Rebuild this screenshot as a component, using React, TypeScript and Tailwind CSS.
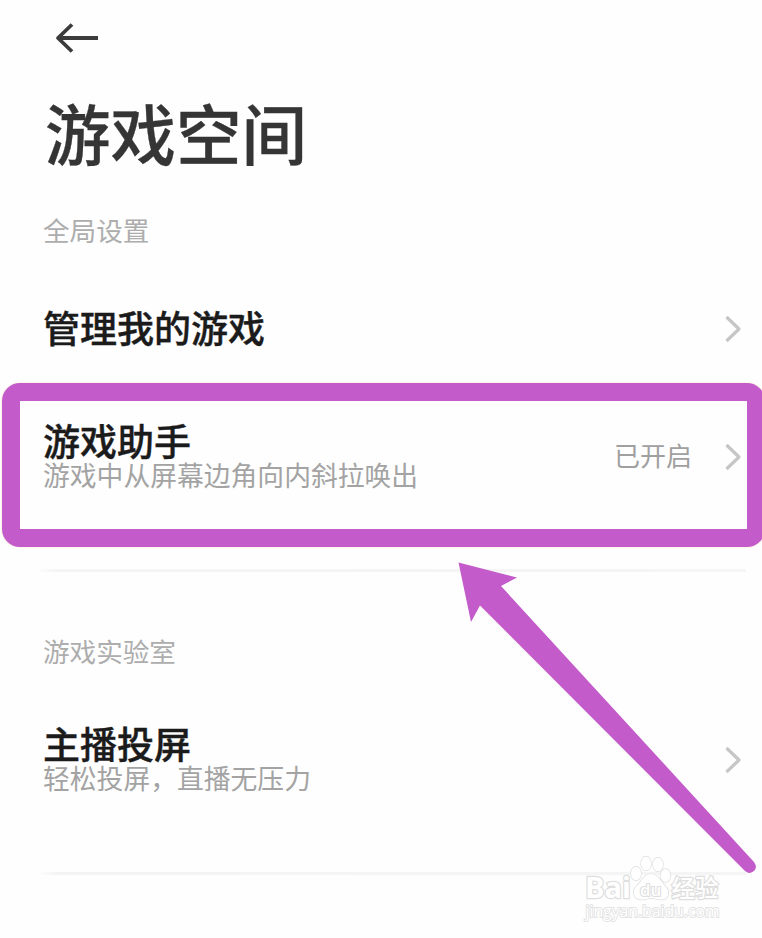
import type { ReactNode } from "react"
import { clsx } from "clsx"

interface SettingRowProps {
  title: string
  description?: string
  value?: string
  className?: string
}

function BackArrow() {
  return (
    <svg width="44" height="32" viewBox="0 0 44 32" fill="none" stroke="#3c3c3c" strokeWidth="3.8">
      <path d="M43 16H3" />
      <path d="M17 2.5L3 16L17 29.5" strokeLinejoin="round" />
    </svg>
  )
}

function ChevronIcon() {
  return (
    <svg width="18" height="28" viewBox="0 0 18 28" fill="none" stroke="#c6c6c6" strokeWidth="3.2">
      <path d="M2.5 2L15 14L2.5 26" strokeLinejoin="round" />
    </svg>
  )
}

function SectionLabel({ children, className }: { children: ReactNode; className?: string }) {
  return <h2 className={clsx("h-10 pl-[43px] text-[26.6px] leading-9 text-[#adadad]", className)}>{children}</h2>
}

function SettingRow({ title, description, value, className }: SettingRowProps) {
  return (
    <button type="button" className={clsx("flex w-full items-center pr-5 pl-[43px] text-left", className)}>
      <span className={clsx("flex flex-1 flex-col", description ? "pb-0.5" : "pb-[5px]")}>
        <span className="text-[37px] leading-9 font-medium text-[#1b1b1b] [-webkit-text-stroke:0.4px_#1b1b1b]">
          {title}
        </span>
        {description && <span className="text-[26.8px] leading-[33px] text-[#a3a3a3]">{description}</span>}
      </span>
      {value && <span className="mr-8 pb-1 text-[26px] leading-8 text-[#a0a0a0]">{value}</span>}
      <ChevronIcon />
    </button>
  )
}

function Divider() {
  return <div className="mr-4 ml-9 h-[3px] bg-linear-to-r from-transparent via-[#f4f4f4] via-3% to-[#f5f5f5]" />
}

// Highlight frame and pointer drawn over the settings list
function Annotation() {
  return (
    <>
      <div className="pointer-events-none absolute top-[383px] left-[2px] h-[164px] w-[763px] rounded-[18px] border-[18px] border-[#c35bca] shadow-[0_0_2px_#ffd9b8]" />
      <svg className="pointer-events-none absolute inset-0" width="762" height="938" viewBox="0 0 762 938">
        <path
          d="M458.5 562.5L517 577.5L501 586L754 862Q757.5 867 754.5 870.5Q750 875 745 871L480 605.5L471 622Z"
          fill="#c35bca"
        />
      </svg>
    </>
  )
}

function Watermark() {
  return (
    <svg
      className="pointer-events-none absolute top-[852px] left-[580px]"
      width="150"
      height="76"
      viewBox="0 0 150 76"
      fill="#fff"
      stroke="#dedede"
      strokeWidth="1.4"
    >
      <g fontFamily="'Open Sans', 'Noto Sans CJK SC', sans-serif" paintOrder="stroke">
        <text x="5" y="46" fontSize="29" fontWeight="700" strokeWidth="2.4" textLength="46" lengthAdjust="spacingAndGlyphs">
          Bai
        </text>
        <ellipse cx="56" cy="21.5" rx="5" ry="6.8" />
        <ellipse cx="66" cy="11.5" rx="5" ry="7" />
        <ellipse cx="78" cy="12.5" rx="5" ry="6.8" />
        <ellipse cx="85.5" cy="23.5" rx="5" ry="6.5" />
        <path d="M71 22C64 22 61 30 56 35C52 39 53 47 61 47.5C66 48 68 46 71 46C74 46 77 48 82 47.5C89 47 90 39 86 35C81 30 78 22 71 22Z" />
        <text x="60" y="43.5" fontSize="16" fontWeight="600" strokeWidth="2.2" textLength="21" lengthAdjust="spacingAndGlyphs">
          du
        </text>
        <text x="91.5" y="44.5" fontSize="24" fontWeight="500" strokeWidth="2.4" textLength="47" lengthAdjust="spacingAndGlyphs">
          经验
        </text>
        <text x="5.5" y="65" fontSize="15.5" stroke="#e2e2e2" strokeWidth="1.8" textLength="134" lengthAdjust="spacingAndGlyphs">
          jingyan.baidu.com
        </text>
      </g>
    </svg>
  )
}

export default function App() {
  return (
    <div className="relative h-[938px] w-[762px] overflow-hidden bg-[#fefefe] font-['Noto_Sans_CJK_SC',sans-serif]">
      <header className="pt-[22px]">
        <button type="button" aria-label="返回" className="ml-[55px] block h-8">
          <BackArrow />
        </button>
        <h1 className="mt-[38px] ml-[45px] text-[65.5px] leading-[80px] font-medium text-[#353535] [-webkit-text-stroke:0.3px_#353535]">
          游戏空间
        </h1>
      </header>

      <section>
        <SectionLabel className="mt-10">全局设置</SectionLabel>
        <SettingRow title="管理我的游戏" className="mt-[45px] h-16" />
        <SettingRow title="游戏助手" description="游戏中从屏幕边角向内斜拉唤出" value="已开启" className="mt-8 h-32" />
      </section>
      <div className="mt-12">
        <Divider />
      </div>

      <section>
        <SectionLabel className="mt-[61px]">游戏实验室</SectionLabel>
        <SettingRow title="主播投屏" description="轻松投屏，直播无压力" className="mt-[23px] h-32" />
      </section>
      <div className="mt-12">
        <Divider />
      </div>

      <Annotation />
      <Watermark />
    </div>
  )
}
